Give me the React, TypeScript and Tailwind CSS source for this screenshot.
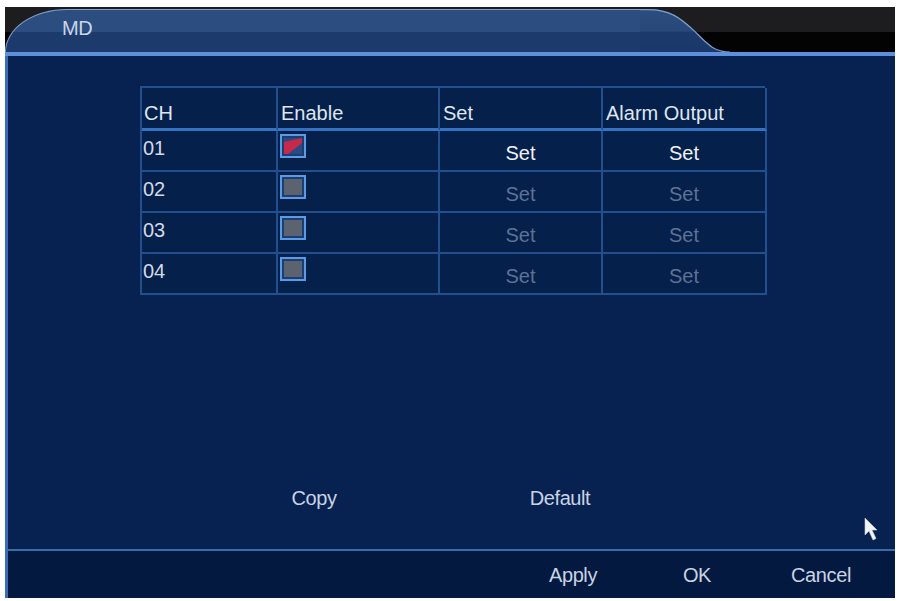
import React from 'react';

const font = "font-['Liberation_Sans',Arial,sans-serif]";

const rows = [
  { ch: '01', on: true },
  { ch: '02', on: false },
  { ch: '03', on: false },
  { ch: '04', on: false },
];

const CheckBox: React.FC<{ on: boolean }> = ({ on }) => (
  <div className="w-[26px] h-[24px] border-2 border-[#5b9be6] bg-[#1c3d70] p-[2px]">
    <div className={`w-full h-full relative overflow-hidden ${on ? 'bg-[#2a4a86]' : 'bg-[#5c6370]'}`}>
      {on && (
        <svg viewBox="0 0 18 16" className="absolute inset-0 w-full h-full">
          <polygon points="0,4 18,0 18,5 4,16 0,16" fill="#c8284a" />
        </svg>
      )}
    </div>
  </div>
);

const Cursor = () => (
  <svg viewBox="0 0 14 25" className="absolute left-[864px] top-[517px] w-[14px] h-[25px]">
    <path d="M1 1 L1 18 L5 14 L9 23 L12 21.5 L8 13 L13 13 Z" fill="#f2f4f8" stroke="#c8ccd4" strokeWidth="0.6" />
  </svg>
);

const TabCurve = () => (
  <svg viewBox="0 0 92 43" className="w-[92px] h-[43px] block" preserveAspectRatio="none">
    <defs>
      <linearGradient id="tabg" x1="0" y1="0" x2="0" y2="1">
        <stop offset="0" stopColor="#2c4d80" />
        <stop offset="0.52" stopColor="#284879" />
        <stop offset="0.53" stopColor="#1c3b6c" />
        <stop offset="1" stopColor="#1a386a" />
      </linearGradient>
    </defs>
    <path d="M0 0 L8 0 C30 0 40 8 55 22 C68 35 74 43 90 43 L0 43 Z" fill="url(#tabg)" />
    <path d="M0 0.6 L8 0.6 C30 0.6 40 8.6 55 22.6 C68 35.6 74 43 90 43" fill="none" stroke="#7f9dcc" strokeWidth="1.2" />
  </svg>
);

export default function App() {
  return (
    <div className={`w-[899px] h-[601px] bg-white pt-[7px] pl-[5px] pr-[4px] pb-[3px] ${font} relative overflow-hidden`}>
      <div className="w-full h-full flex flex-col">
        {/* title bar */}
        <div className="h-[45px] bg-[linear-gradient(#1d1d1f_0_55%,#030304_55%)] flex items-end">
          <div className="flex items-end h-[43px]">
            <div className="w-[635px] h-full rounded-tl-[62px_43px] border-t border-l border-[#7f9dcc] bg-[linear-gradient(#2c4d80_0_52%,#1c3b6c_52%)] flex items-center pl-[56px]">
              <span className="text-[20px] text-[#c9d5e8] leading-none -mt-[6px] tracking-[-0.3px]">MD</span>
            </div>
            <TabCurve />
          </div>
        </div>
        <div className="h-[4px] bg-[#5d8fda]" />

        {/* main panel */}
        <div className="flex-1 flex flex-col bg-[#072250] border-l-[3px] border-[#3a6cb8]">
          <div className="h-[493px] flex flex-col">
            <div className="pt-[30px] pl-[132px]">
              <div className="grid grid-cols-[136px_162px_163px_164px] w-[625px] border-t-2 border-l-2 border-[#22508e] bg-[#05204b]">
                {['CH', 'Enable', 'Set', 'Alarm Output'].map((h, i) => (
                  <div
                    key={h}
                    className={`h-[43px] border-r-2 border-[#22508e] border-b-[3px] border-b-[#3472c4] flex items-end pb-0 text-[20px] text-[#dfe6f0] ${i === 0 ? 'pl-[2px]' : 'pl-[3px]'}`}
                  >
                    {h}
                  </div>
                ))}
                {rows.map((r, ri) => (
                  <React.Fragment key={r.ch}>
                    <div className="h-[41px] border-r-2 border-b-2 border-[#22508e] pl-[1px] pt-[6px] text-[20px] leading-[22px] text-[#d3dae6]">
                      {r.ch}
                    </div>
                    <div className="h-[41px] border-r-2 border-b-2 border-[#22508e] pl-[2px] pt-[3px]">
                      <CheckBox on={r.on} />
                    </div>
                    <div className={`h-[41px] border-r-2 border-b-2 border-[#22508e] flex items-center justify-center pt-[4px] text-[20px] ${ri === 0 ? 'text-[#eef2f8]' : 'text-[#5d7296]'}`}>
                      Set
                    </div>
                    <div className={`h-[41px] border-r-2 border-b-2 border-[#22508e] flex items-center justify-center pt-[4px] text-[20px] ${ri === 0 ? 'text-[#eef2f8]' : 'text-[#5d7296]'}`}>
                      Set
                    </div>
                  </React.Fragment>
                ))}
              </div>
            </div>

            <div className="mt-auto mb-[31px] h-[40px] flex items-center text-[20px] tracking-[-0.4px] text-[#c9d3e3]">
              <div className="ml-[256px] w-[100px] text-center">Copy</div>
              <div className="ml-[146px] w-[100px] text-center">Default</div>
            </div>
          </div>

          <div className="h-[2px] bg-[#3a6ca6]" />

          <div className="flex-1 bg-[#04193f] flex items-center justify-end gap-[24px] pr-[24px] text-[20px] tracking-[-0.4px] text-[#c9d3e3]">
            <div className="w-[100px] text-center">Apply</div>
            <div className="w-[100px] text-center">OK</div>
            <div className="w-[100px] text-center">Cancel</div>
          </div>
        </div>
      </div>
      <Cursor />
    </div>
  );
}
